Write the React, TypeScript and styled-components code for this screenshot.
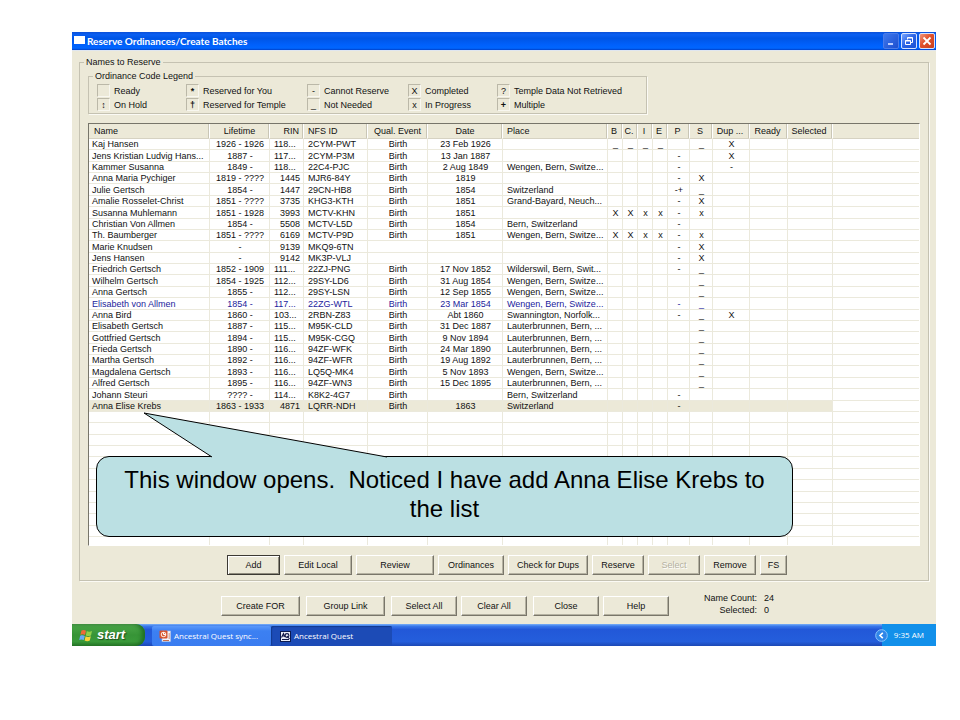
import React from "react";
import styled, { createGlobalStyle, css } from "styled-components";

const GlobalStyle = createGlobalStyle`
  * { box-sizing: border-box; }
  body {
    margin: 0;
    background: #fff;
    color: #111;
    font: 9px/10px "Liberation Sans", Arial, sans-serif;
  }
  button { font: inherit; color: inherit; }
`;

const face = "#ece9d8";
const gridLine = "#ebe9dc";

const Slide = styled.main`
  padding: 32px 24px 32px 72px;
`;

const Screen = styled.div`
  position: relative;
  display: flex;
  flex-direction: column;
  min-width: 864px;
  background: ${face};
`;

/* ---------- title bar ---------- */

const TitleBar = styled.header`
  display: flex;
  align-items: center;
  gap: 2px;
  height: 19px;
  padding: 0 1px 0 2px;
  border-bottom: 1px solid #dfe6f0;
  background: linear-gradient(#0b50d8, #0a5ff2 15%, #0055e5 35%, #0060fb 70%, #0066ff 90%, #0040c8);
`;

const WindowIcon = styled.span`
  width: 11px;
  height: 8px;
  margin-bottom: 2px;
  background: #fff;
`;

const Title = styled.h1`
  flex: 1;
  margin: 0;
  color: #fff;
  font: bold 10px/12px Lato, "Open Sans", sans-serif;
`;

const Caption = styled.button<{ $kind?: "dim" | "close" }>`
  display: flex;
  align-items: center;
  justify-content: center;
  width: 16px;
  height: 16px;
  padding: 0;
  border: 1px solid ${(p) => (p.$kind === "dim" ? "#4a7be8" : "#d5e2ff")};
  border-radius: 2px;
  background: ${(p) =>
    p.$kind === "close"
      ? "linear-gradient(135deg, #f0967c, #e0512c 45%, #c8401c)"
      : p.$kind === "dim"
      ? "linear-gradient(135deg, #3f78ec, #1c4fd0)"
      : "linear-gradient(135deg, #7aa6ff, #2a62e4 50%, #1d52d2)"};
`;

/* ---------- group boxes ---------- */

const Group = styled.fieldset`
  min-width: 0;
  margin: 6px 7px 0;
  padding: 4px 8px 5px;
  border: 1px solid #c5c2b2;
  box-shadow: 1px 1px 0 #fbfaf4;
`;

const LegendGroup = styled.fieldset`
  display: grid;
  grid-template-columns: 89px 121px 101px 89px auto;
  gap: 1px 0;
  max-width: 559px;
  margin: 0;
  padding: 3px 8px 2px;
  border: 1px solid #c5c2b2;
  box-shadow: 1px 1px 0 #fbfaf4;
`;

const GroupName = styled.legend`
  margin-left: -4px;
  padding: 0 2px;
  line-height: 10px;
`;

const Code = styled.span`
  display: flex;
  align-items: center;
  gap: 4px;
  white-space: nowrap;
`;

const CodeBox = styled.span<{ $strong?: boolean }>`
  display: flex;
  align-items: center;
  justify-content: center;
  width: 13px;
  height: 13px;
  border: 1px solid;
  border-color: #bbb8a8 #f8f7f0 #f8f7f0 #bbb8a8;
  font-weight: ${(p) => (p.$strong ? "bold" : "normal")};
`;

/* ---------- list ---------- */

const ListFrame = styled.div`
  margin-top: 9px;
  border: 1px solid;
  border-color: #77756a #fff #fff #77756a;
  background: #fff;
`;

const List = styled.table`
  width: 100%;
  table-layout: fixed;
  border-collapse: separate;
  border-spacing: 0;
`;

type Align = "left" | "center" | "right";

const Col = styled.col<{ $w?: number }>`
  width: ${(p) => (p.$w ? `${p.$w}px` : "auto")};
`;

const Head = styled.th<{ $align: Align }>`
  height: 15px;
  padding: 0 4px;
  overflow: hidden;
  border-right: 1px solid #fff;
  border-bottom: 1px solid #d6d2c2;
  box-shadow: inset -1px 0 #c9c6b6;
  background: ${face};
  font-weight: normal;
  text-align: ${(p) => p.$align};
  white-space: nowrap;
  &:first-child { padding-left: 5px; }
  &:last-child { border-right: 0; box-shadow: none; }
`;

const NarrowHead = styled(Head)`
  padding: 0 2px 0 0;
`;

const Cell = styled.td<{ $align: Align }>`
  padding: 0 3px 0 4px;
  overflow: hidden;
  border-right: 1px solid ${gridLine};
  border-bottom: 1px solid ${gridLine};
  text-align: ${(p) => p.$align};
  white-space: nowrap;
  &:first-child { padding-left: 3px; }
  &:last-child { border-right: 0; }
`;

const Row = styled.tr<{ $tone?: "link" | "selected" }>`
  height: 11px;
  &:nth-child(8n + 2), &:nth-child(8n + 5), &:nth-child(8n + 7) { height: 12px; }
  &:last-child { height: 8px; }
  &:last-child td { border-bottom: 0; }
  ${(p) => p.$tone === "link" && css`color: #1c1c9c;`}
  ${(p) => p.$tone === "selected" && css`td:not(:last-child) { background: ${face}; }`}
  td { line-height: 10px; }
  &:last-child td { line-height: 8px; }
`;

/* ---------- push buttons ---------- */

const ButtonRow = styled.div<{ $gap: number }>`
  display: flex;
  gap: ${(p) => p.$gap}px;
`;

const GroupButtons = styled(ButtonRow)`
  margin: 9px 0 0 139px;
`;

const Push = styled.button<{ $w: number; $primary?: boolean }>`
  width: ${(p) => p.$w}px;
  height: 20px;
  padding: 0;
  border: 1px solid;
  border-color: #fff #79766a #79766a #fff;
  box-shadow: inset -1px -1px #b5b2a2;
  background: ${face};
  white-space: nowrap;
  ${(p) =>
    p.$primary &&
    css`
      border-color: #3c3a34;
      box-shadow: inset 1px 1px #fff, inset -1px -1px #8f8c7e;
    `}
  &:disabled { color: #b4b1a1; text-shadow: 1px 1px #fff; }
`;

const Footer = styled.div`
  display: flex;
  align-items: flex-start;
  padding: 12px 0 8px 149px;
`;

const FooterButtons = styled(ButtonRow)`
  margin-top: 3px;
`;

const Counts = styled.dl`
  display: grid;
  grid-template-columns: 57px auto;
  gap: 2px 7px;
  margin: 0 0 0 31px;
  dt { text-align: right; white-space: nowrap; }
  dd { margin: 0; }
`;

/* ---------- taskbar ---------- */

const TaskBar = styled.nav`
  display: flex;
  height: 22px;
  background: linear-gradient(#7ab0f8, #3a78ea 10%, #2258d8 25%, #245edc 80%, #1c48b4);
  color: #fff;
  font: 8px/12px "Open Sans", "Noto Sans", sans-serif;
`;

const Start = styled.button`
  display: flex;
  align-items: center;
  gap: 3px;
  width: 73px;
  margin-right: 7px;
  padding: 0 0 0 7px;
  border: 0;
  border-radius: 0 9px 9px 0;
  background: linear-gradient(#5aa858, #46a244 15%, #379437 50%, #3a9a3a 80%, #2a7a2a);
  box-shadow: inset -3px 0 4px #1f6f22;
  color: #fff;
  font: italic bold 13px/16px "Liberation Sans", Arial, sans-serif;
  text-shadow: 1px 1px 1px #1d4d1d;
`;

const Task = styled.button<{ $active?: boolean }>`
  display: flex;
  align-items: center;
  gap: 3px;
  width: ${(p) => (p.$active ? 121 : 119)}px;
  margin-top: 2px;
  padding: 0 0 0 ${(p) => (p.$active ? 9 : 7)}px;
  border: 0;
  border-radius: 2px;
  background: ${(p) => (p.$active ? "#1c4bb6" : "linear-gradient(#5a98fa, #3c80f2 25%, #3a7cf0)")};
  box-shadow: ${(p) => (p.$active ? "inset 1px 1px 1px #123a8e" : "none")};
  white-space: nowrap;
`;

const Tray = styled.div`
  display: flex;
  align-items: center;
  gap: 6px;
  margin-left: auto;
  padding-right: 12px;
  background: linear-gradient(90deg, transparent 7px, #1290ea 7px);
`;

const TrayButton = styled.button`
  display: flex;
  padding: 0;
  border: 0;
  background: none;
`;

/* ---------- callout ---------- */

const Callout = styled.aside`
  position: absolute;
  top: 424px;
  left: 24px;
  right: 143px;
  padding: 8px 14px 13px;
  border: 1px solid #000;
  border-radius: 13px;
  background: #bbe0e3;
  color: #000;
  font-size: 24px;
  line-height: 29px;
  text-align: center;
  white-space: pre-wrap;
`;

const Tail = styled.svg`
  position: absolute;
  top: -45px;
  left: 46px;
`;

const columns: { label: string; w?: number; align: Align; narrow?: boolean }[] = [
  { label: "Name", w: 121, align: "left" },
  { label: "Lifetime", w: 60, align: "center" },
  { label: "RIN", w: 34, align: "right" },
  { label: "NFS ID", w: 64, align: "left" },
  { label: "Qual. Event", w: 60, align: "center" },
  { label: "Date", w: 75, align: "center" },
  { label: "Place", w: 105, align: "left" },
  { label: "B", w: 15, align: "center", narrow: true },
  { label: "C.", w: 15, align: "center", narrow: true },
  { label: "I", w: 15, align: "center", narrow: true },
  { label: "E", w: 15, align: "center", narrow: true },
  { label: "P", w: 22, align: "center", narrow: true },
  { label: "S", w: 23, align: "center", narrow: true },
  { label: "Dup ...", w: 37, align: "center", narrow: true },
  { label: "Ready", w: 38, align: "center", narrow: true },
  { label: "Selected", w: 45, align: "center", narrow: true },
  { label: "", align: "left" },
];

const people = [
  "Kaj Hansen|1926 - 1926|118...|2CYM-PWT|Birth|23 Feb 1926||_|_|_|_||_|X",
  "Jens Kristian Ludvig Hans...|1887 -    |117...|2CYM-P3M|Birth|13 Jan 1887||||||-||X",
  "Kammer Susanna|1849 -    |118...|22C4-PJC|Birth|2 Aug 1849|Wengen, Bern, Switze...|||||-||-",
  "Anna Maria Pychiger|1819 - ????|1445|MJR6-84Y|Birth|1819||||||-|X|",
  "Julie Gertsch|1854 -    |1447|29CN-HB8|Birth|1854|Switzerland|||||-+|_|",
  "Amalie Rosselet-Christ|1851 - ????|3735|KHG3-KTH|Birth|1851|Grand-Bayard, Neuch...|||||-|X|",
  "Susanna Muhlemann|1851 - 1928|3993|MCTV-KHN|Birth|1851||X|X|x|x|-|x|",
  "Christian Von Allmen|1854 -    |5508|MCTV-L5D|Birth|1854|Bern, Switzerland|||||-||",
  "Th. Baumberger|1851 - ????|6169|MCTV-P9D|Birth|1851|Wengen, Bern, Switze...|X|X|x|x|-|x|",
  "Marie Knudsen|-|9139|MKQ9-6TN||||||||-|X|",
  "Jens Hansen|-|9142|MK3P-VLJ||||||||-|X|",
  "Friedrich Gertsch|1852 - 1909|111...|22ZJ-PNG|Birth|17 Nov 1852|Wilderswil, Bern, Swit...|||||-|_|",
  "Wilhelm Gertsch|1854 - 1925|112...|29SY-LD6|Birth|31 Aug 1854|Wengen, Bern, Switze...||||||_|",
  "Anna Gertsch|1855 -    |112...|29SY-LSN|Birth|12 Sep 1855|Wengen, Bern, Switze...||||||_|",
  "Elisabeth von Allmen|1854 -    |117...|22ZG-WTL|Birth|23 Mar 1854|Wengen, Bern, Switze...|||||-|_|",
  "Anna Bird|1860 -    |103...|2RBN-Z83|Birth|Abt 1860|Swannington, Norfolk...|||||-|_|X",
  "Elisabeth Gertsch|1887 -    |115...|M95K-CLD|Birth|31 Dec 1887|Lauterbrunnen, Bern, ...||||||_|",
  "Gottfried Gertsch|1894 -    |115...|M95K-CGQ|Birth|9 Nov 1894|Lauterbrunnen, Bern, ...||||||_|",
  "Frieda Gertsch|1890 -    |116...|94ZF-WFK|Birth|24 Mar 1890|Lauterbrunnen, Bern, ...||||||_|",
  "Martha Gertsch|1892 -    |116...|94ZF-WFR|Birth|19 Aug 1892|Lauterbrunnen, Bern, ...||||||_|",
  "Magdalena Gertsch|1893 -    |116...|LQ5Q-MK4|Birth|5 Nov 1893|Wengen, Bern, Switze...||||||_|",
  "Alfred Gertsch|1895 -    |116...|94ZF-WN3|Birth|15 Dec 1895|Lauterbrunnen, Bern, ...||||||_|",
  "Johann Steuri|???? -    |114...|K8K2-4G7|Birth||Bern, Switzerland|||||-||",
  "Anna Elise Krebs|1863 - 1933|4871|LQRR-NDH|Birth|1863|Switzerland|||||-||",
].map((line) => line.split("|"));

const emptyRows = 12;
const rows: string[][] = [...people, ...Array.from({ length: emptyRows }, () => [] as string[])];

const toneOf = (name?: string) =>
  name === "Elisabeth von Allmen" ? "link" : name === "Anna Elise Krebs" ? "selected" : undefined;

const codes: [string, string][] = [
  ["", "Ready"],
  ["*", "Reserved for You"],
  ["-", "Cannot Reserve"],
  ["X", "Completed"],
  ["?", "Temple Data Not Retrieved"],
  ["↕", "On Hold"],
  ["†", "Reserved for Temple"],
  ["_", "Not Needed"],
  ["x", "In Progress"],
  ["+", "Multiple"],
];

const strongMarks = ["*", "↕", "†", "+"];

const WindowsFlag = () => (
  <svg width="15" height="15" viewBox="0 0 15 15" aria-hidden="true">
    <path d="M2.5 2.6C4 1.6 5.6 1.8 7 2.7L6 7C4.600 6.200 3 6 1.400 6.900Z" fill="#f0683a" />
    <path d="M7.800 3.100C9.400 4 11 4 13 3L12 7.400C10.200 8.200 8.400 8.300 6.800 7.400Z" fill="#8fd04a" />
    <path d="M1.200 7.700C2.800 6.900 4.400 7.100 5.800 7.900L4.800 12.100C3.400 11.300 1.800 11.200 0.200 12Z" fill="#6aa8f8" />
    <path d="M6.600 8.300C8.200 9.100 9.900 9.100 11.800 8.300L10.800 12.600C9 13.500 7.200 13.400 5.600 12.500Z" fill="#fbd23c" />
  </svg>
);

const SlidesIcon = () => (
  <svg width="12" height="12" viewBox="0 0 12 12" aria-hidden="true">
    <rect x="3" y="1" width="8.500" height="10.500" fill="#f4f4fa" stroke="#b8c4e0" strokeWidth="0.600" />
    <rect x="0.500" y="0.500" width="8" height="8" rx="1" fill="#d6512c" />
    <circle cx="4.500" cy="4.500" r="2.200" fill="none" stroke="#fbe0d4" strokeWidth="1.100" />
    <path d="M4.500 2.300V4.500H6.700" fill="none" stroke="#fff" />
    <path d="M4 10.500H10M9.500 4H11M9.500 6H11M9.500 8H11" stroke="#c87050" />
  </svg>
);

const QuestIcon = () => (
  <svg width="11" height="11" viewBox="0 0 11 11" aria-hidden="true">
    <rect x="0.500" y="0.500" width="10" height="10" fill="#e8ecf8" stroke="#0a1a50" />
    <path d="M1.500 6.500L3.500 2.500L5 6M2.200 5H5" fill="none" stroke="#101848" strokeWidth="1.100" />
    <circle cx="7" cy="4.500" r="1.900" fill="none" stroke="#101848" strokeWidth="1.100" />
    <path d="M7 5L9.500 8M2 8.500H9" stroke="#101848" strokeWidth="1.100" />
  </svg>
);

export default function App() {
  return (
    <>
      <GlobalStyle />
      <Slide>
        <Screen>
          <TitleBar>
            <WindowIcon />
            <Title>Reserve Ordinances/Create Batches</Title>
            <Caption $kind="dim" aria-label="Minimize">
              <svg width="10" height="10" viewBox="0 0 10 10"><path d="M2 8H7" stroke="#b8ccff" strokeWidth="2" /></svg>
            </Caption>
            <Caption aria-label="Restore">
              <svg width="10" height="10" viewBox="0 0 10 10" fill="none" stroke="#fff">
                <path d="M3.500 3.500V1.500H8.500V6.500H6.500M3.500 2H8.500" />
                <path d="M1.500 4.500H6.500V8.500H1.500ZM1.500 5H6.500" />
              </svg>
            </Caption>
            <Caption $kind="close" aria-label="Close window">
              <svg width="10" height="10" viewBox="0 0 10 10"><path d="M1.500 1.500L8.500 8.500M8.500 1.500L1.500 8.500" stroke="#fff" strokeWidth="1.800" /></svg>
            </Caption>
          </TitleBar>

          <Group>
            <GroupName>Names to Reserve</GroupName>
            <LegendGroup>
              <GroupName>Ordinance Code Legend</GroupName>
              {codes.map(([mark, label]) => (
                <Code key={label}>
                  <CodeBox $strong={strongMarks.includes(mark)}>{mark}</CodeBox>
                  {label}
                </Code>
              ))}
            </LegendGroup>

            <ListFrame>
              <List>
                <colgroup>
                  {columns.map((c, i) => <Col key={i} $w={c.w} />)}
                </colgroup>
                <thead>
                  <tr>
                    {columns.map((c, i) =>
                      c.narrow ? (
                        <NarrowHead key={i} $align={c.align}>{c.label}</NarrowHead>
                      ) : (
                        <Head key={i} $align={c.align}>{c.label}</Head>
                      )
                    )}
                  </tr>
                </thead>
                <tbody>
                  {rows.map((r, i) => (
                    <Row key={i} $tone={toneOf(r[0])}>
                      {columns.map((c, j) => (
                        <Cell key={j} $align={j === 2 && r[2]?.endsWith("...") ? "left" : c.align}>
                          {r[j]}
                        </Cell>
                      ))}
                    </Row>
                  ))}
                </tbody>
              </List>
            </ListFrame>

            <GroupButtons $gap={4}>
              <Push $w={53} $primary>Add</Push>
              <Push $w={68}>Edit Local</Push>
              <Push $w={78}>Review</Push>
              <Push $w={66}>Ordinances</Push>
              <Push $w={80}>Check for Dups</Push>
              <Push $w={52}>Reserve</Push>
              <Push $w={52} disabled>Select</Push>
              <Push $w={52}>Remove</Push>
              <Push $w={27}>FS</Push>
            </GroupButtons>
          </Group>

          <Footer>
            <FooterButtons $gap={6}>
              <Push $w={79}>Create FOR</Push>
              <Push $w={79}>Group Link</Push>
              <ButtonRow $gap={4}>
                <Push $w={66}>Select All</Push>
                <Push $w={66}>Clear All</Push>
              </ButtonRow>
              <ButtonRow $gap={4}>
                <Push $w={66}>Close</Push>
                <Push $w={66}>Help</Push>
              </ButtonRow>
            </FooterButtons>
            <Counts>
              <dt>Name Count:</dt>
              <dd>24</dd>
              <dt>Selected:</dt>
              <dd>0</dd>
            </Counts>
          </Footer>

          <TaskBar>
            <Start><WindowsFlag />start</Start>
            <Task><SlidesIcon />Ancestral Quest sync...</Task>
            <Task $active><QuestIcon />Ancestral Quest</Task>
            <Tray>
              <TrayButton aria-label="Show hidden icons">
                <svg width="13" height="13" viewBox="0 0 13 13">
                  <circle cx="6.500" cy="6.500" r="5.800" fill="#2f86e8" stroke="#8cc4fa" />
                  <path d="M7.800 3.800L5 6.500L7.800 9.200" fill="none" stroke="#fff" strokeWidth="1.600" />
                </svg>
              </TrayButton>
              <span>9:35 AM</span>
            </Tray>
          </TaskBar>

          <Callout>
            <Tail width="246" height="46" viewBox="0 0 246 46" aria-hidden="true">
              <path d="M69 45L1 1L244 45V46H69Z" fill="#bbe0e3" />
              <path d="M69 45L1 1L244 45" fill="none" stroke="#000" />
            </Tail>
            {"This window opens.  Noticed I have add Anna Elise Krebs to the list"}
          </Callout>
        </Screen>
      </Slide>
    </>
  );
}
